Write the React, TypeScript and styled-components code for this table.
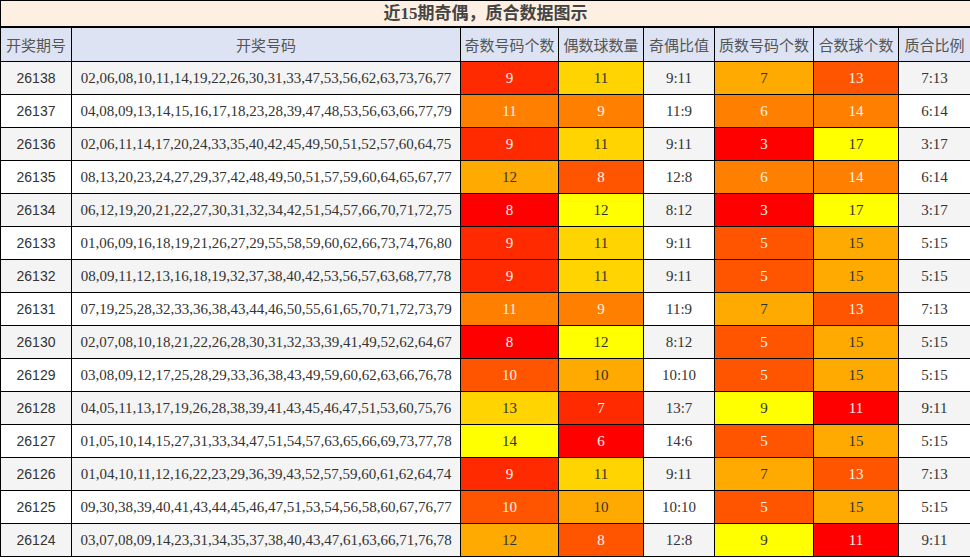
import React from "react";
import styled, { createGlobalStyle } from "styled-components";

const Global = createGlobalStyle`
  html, body { margin: 0; padding: 0; background: #fff; }
  body { font-family: "Liberation Serif", "Noto Sans CJK SC", serif; }
`;

const Table = styled.table`
  width: 970px;
  border-collapse: collapse;
  table-layout: fixed;
  border: 1px solid #000;
`;

const TitleCell = styled.th`
  height: 25px;
  padding: 0;
  background: #fdf0e2;
  border-bottom: 2px solid #000;
  font-family: "Liberation Serif", "Noto Sans CJK SC", serif;
  font-weight: bold;
  font-size: 17px;
  color: #444;
  line-height: 25px;
  text-align: center;
`;

const HeadCell = styled.th`
  height: 33px;
  padding: 0;
  background: #dde3f3;
  border: 1px solid #000;
  font-family: "Noto Sans CJK SC", sans-serif;
  font-weight: normal;
  font-size: 15px;
  color: #555;
  text-align: center;
  white-space: nowrap;
`;

const Row = styled.tr<{ $alt: boolean }>`
  background: ${(p) => (p.$alt ? "#f4f4f4" : "#ffffff")};
`;

const Cell = styled.td<{ $sans?: boolean }>`
  height: 32px;
  padding: 0;
  border: 1px solid #000;
  text-align: center;
  font-family: ${(p) =>
    p.$sans ? '"Liberation Sans", "Noto Sans CJK SC", sans-serif' : '"Liberation Serif", serif'};
  font-size: ${(p) => (p.$sans ? "14px" : "15px")};
  color: #333;
  white-space: nowrap;
`;

const HeatCell = styled(Cell)<{ $bg: string; $light: boolean }>`
  background: ${(p) => p.$bg};
  color: ${(p) => (p.$light ? "#fff4ee" : "#333")};
`;

const LEVELS = ["#ff0000", "#ff2a00", "#ff5500", "#ff8000", "#ffaa00", "#ffd400", "#ffff00"];

type Rec = [string, string, number, number, number, number];

const DATA: Rec[] = [
  ["26138", "02,06,08,10,11,14,19,22,26,30,31,33,47,53,56,62,63,73,76,77", 9, 11, 7, 13],
  ["26137", "04,08,09,13,14,15,16,17,18,23,28,39,47,48,53,56,63,66,77,79", 11, 9, 6, 14],
  ["26136", "02,06,11,14,17,20,24,33,35,40,42,45,49,50,51,52,57,60,64,75", 9, 11, 3, 17],
  ["26135", "08,13,20,23,24,27,29,37,42,48,49,50,51,57,59,60,64,65,67,77", 12, 8, 6, 14],
  ["26134", "06,12,19,20,21,22,27,30,31,32,34,42,51,54,57,66,70,71,72,75", 8, 12, 3, 17],
  ["26133", "01,06,09,16,18,19,21,26,27,29,55,58,59,60,62,66,73,74,76,80", 9, 11, 5, 15],
  ["26132", "08,09,11,12,13,16,18,19,32,37,38,40,42,53,56,57,63,68,77,78", 9, 11, 5, 15],
  ["26131", "07,19,25,28,32,33,36,38,43,44,46,50,55,61,65,70,71,72,73,79", 11, 9, 7, 13],
  ["26130", "02,07,08,10,18,21,22,26,28,30,31,32,33,39,41,49,52,62,64,67", 8, 12, 5, 15],
  ["26129", "03,08,09,12,17,25,28,29,33,36,38,43,49,59,60,62,63,66,76,78", 10, 10, 5, 15],
  ["26128", "04,05,11,13,17,19,26,28,38,39,41,43,45,46,47,51,53,60,75,76", 13, 7, 9, 11],
  ["26127", "01,05,10,14,15,27,31,33,34,47,51,54,57,63,65,66,69,73,77,78", 14, 6, 5, 15],
  ["26126", "01,04,10,11,12,16,22,23,29,36,39,43,52,57,59,60,61,62,64,74", 9, 11, 7, 13],
  ["26125", "09,30,38,39,40,41,43,44,45,46,47,51,53,54,56,58,60,67,76,77", 10, 10, 5, 15],
  ["26124", "03,07,08,09,14,23,31,34,35,37,38,40,43,47,61,63,66,71,76,78", 12, 8, 9, 11],
];

const WIDTHS = [71, 389, 98, 85, 71, 99, 85, 72];
const HEADERS = ["开奖期号", "开奖号码", "奇数号码个数", "偶数球数量", "奇偶比值", "质数号码个数", "合数球个数", "质合比例"];

const Heat: React.FC<{ value: number; base: number }> = ({ value, base }) => {
  const lvl = Math.max(0, Math.min(6, value - base));
  return (
    <HeatCell $bg={LEVELS[lvl]} $light={lvl <= 3}>
      {value}
    </HeatCell>
  );
};

export default function App() {
  return (
    <>
      <Global />
      <Table>
        <colgroup>
          {WIDTHS.map((w, i) => (
            <col key={i} style={{ width: w }} />
          ))}
        </colgroup>
        <thead>
          <tr>
            <TitleCell colSpan={8}>近15期奇偶，质合数据图示</TitleCell>
          </tr>
          <tr>
            {HEADERS.map((h) => (
              <HeadCell key={h}>{h}</HeadCell>
            ))}
          </tr>
        </thead>
        <tbody>
          {DATA.map(([id, nums, odd, even, prime, comp], i) => (
            <Row key={id} $alt={i % 2 === 0}>
              <Cell $sans>{id}</Cell>
              <Cell>{nums}</Cell>
              <Heat value={odd} base={8} />
              <Heat value={even} base={6} />
              <Cell>{`${odd}:${even}`}</Cell>
              <Heat value={prime} base={3} />
              <Heat value={comp} base={11} />
              <Cell>{`${prime}:${comp}`}</Cell>
            </Row>
          ))}
        </tbody>
      </Table>
    </>
  );
}
